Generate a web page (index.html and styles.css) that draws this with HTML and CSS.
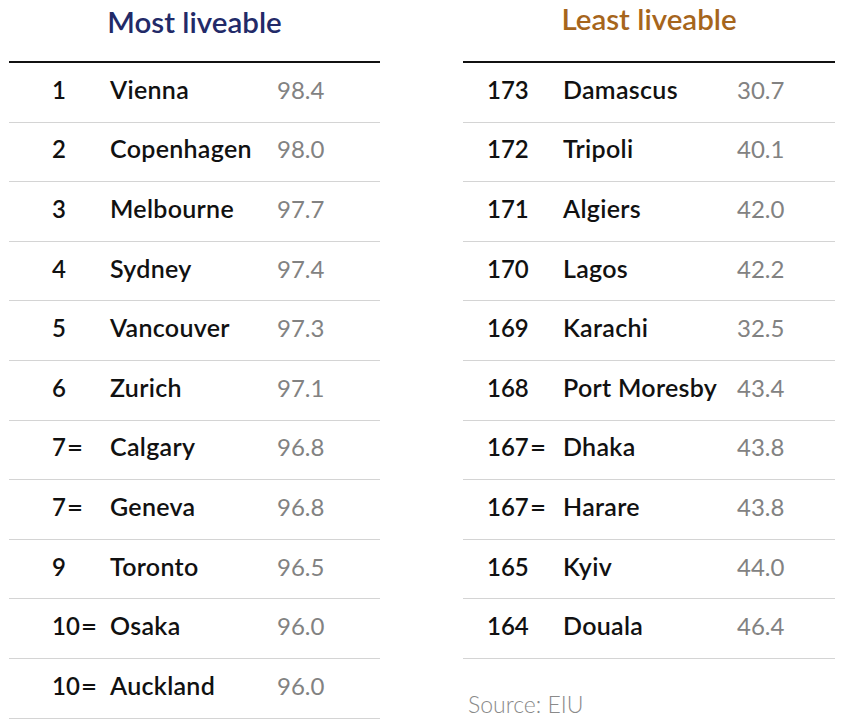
FILE: index.html
```html
<!DOCTYPE html>
<html lang="en">
<head>
<meta charset="utf-8">
<title>Liveability ranking</title>
<link rel="stylesheet" href="styles.css">
</head>
<body>
<div class="page">
  <section class="panel panel-most">
    <h2 class="title title-most">Most liveable</h2>
    <div class="table">
      <div class="row"><span class="rank">1</span><span class="city">Vienna</span><span class="score">98.4</span></div>
      <div class="row"><span class="rank">2</span><span class="city">Copenhagen</span><span class="score">98.0</span></div>
      <div class="row"><span class="rank">3</span><span class="city">Melbourne</span><span class="score">97.7</span></div>
      <div class="row"><span class="rank">4</span><span class="city">Sydney</span><span class="score">97.4</span></div>
      <div class="row"><span class="rank">5</span><span class="city">Vancouver</span><span class="score">97.3</span></div>
      <div class="row"><span class="rank">6</span><span class="city">Zurich</span><span class="score">97.1</span></div>
      <div class="row"><span class="rank">7<span class="eq">=</span></span><span class="city">Calgary</span><span class="score">96.8</span></div>
      <div class="row"><span class="rank">7<span class="eq">=</span></span><span class="city">Geneva</span><span class="score">96.8</span></div>
      <div class="row"><span class="rank">9</span><span class="city">Toronto</span><span class="score">96.5</span></div>
      <div class="row"><span class="rank">10<span class="eq">=</span></span><span class="city">Osaka</span><span class="score">96.0</span></div>
      <div class="row"><span class="rank">10<span class="eq">=</span></span><span class="city">Auckland</span><span class="score">96.0</span></div>
    </div>
  </section>
  <section class="panel panel-least">
    <h2 class="title title-least">Least liveable</h2>
    <div class="table">
      <div class="row"><span class="rank">173</span><span class="city">Damascus</span><span class="score">30.7</span></div>
      <div class="row"><span class="rank">172</span><span class="city">Tripoli</span><span class="score">40.1</span></div>
      <div class="row"><span class="rank">171</span><span class="city">Algiers</span><span class="score">42.0</span></div>
      <div class="row"><span class="rank">170</span><span class="city">Lagos</span><span class="score">42.2</span></div>
      <div class="row"><span class="rank">169</span><span class="city">Karachi</span><span class="score">32.5</span></div>
      <div class="row"><span class="rank">168</span><span class="city">Port Moresby</span><span class="score">43.4</span></div>
      <div class="row"><span class="rank">167<span class="eq">=</span></span><span class="city">Dhaka</span><span class="score">43.8</span></div>
      <div class="row"><span class="rank">167<span class="eq">=</span></span><span class="city">Harare</span><span class="score">43.8</span></div>
      <div class="row"><span class="rank">165</span><span class="city">Kyiv</span><span class="score">44.0</span></div>
      <div class="row"><span class="rank">164</span><span class="city">Douala</span><span class="score">46.4</span></div>
    </div>
    <p class="source">Source: EIU</p>
  </section>
</div>
</body>
</html>
```

FILE: styles.css
```css
html, body {
  margin: 0;
  padding: 0;
  background: #ffffff;
}

body {
  font-family: "Lato", "Open Sans", "Liberation Sans", sans-serif;
  color: #111111;
}

.page {
  display: flex;
  gap: 83px;
  padding-left: 9px;
}

.panel {
  display: flex;
  flex-direction: column;
}

.panel-most {
  width: 371px;
  --rank-w: 58px;
  --city-w: 167px;
  --pad: 43px;
}

.panel-least {
  width: 372px;
  --rank-w: 76px;
  --city-w: 174px;
  --pad: 24px;
}

.title {
  margin: 0;
  height: 61px;
  display: flex;
  justify-content: center;
  font-size: 29.5px;
  font-weight: 600;
  line-height: 1;
  box-sizing: border-box;
}

.title-most {
  color: #222a68;
  padding-top: 7px;
}

.title-least {
  color: #a6651c;
  padding-top: 4px;
}

.table {
  border-top: 2px solid #111111;
}

.row {
  display: grid;
  grid-template-columns: var(--rank-w) var(--city-w) 1fr;
  align-items: baseline;
  align-content: center;
  padding-left: var(--pad);
  height: 59.6px;
  box-sizing: border-box;
  border-bottom: 1.5px solid #d4d4d4;
  font-size: 24px;
  line-height: 1;
  padding-bottom: 6px;
}

.rank {
  font-weight: 600;
  color: #111111;
}

.eq {
  margin-left: 2px;
  display: inline-block;
  transform: scaleX(1.15);
}

.city {
  font-size: 25px;
  font-weight: 600;
  letter-spacing: 0.3px;
  color: #111111;
}

.score {
  font-weight: 400;
  color: #828282;
}

.source {
  margin: 31px 0 0 5px;
  font-size: 23px;
  font-weight: 300;
  color: #8a8a8a;
}
```
